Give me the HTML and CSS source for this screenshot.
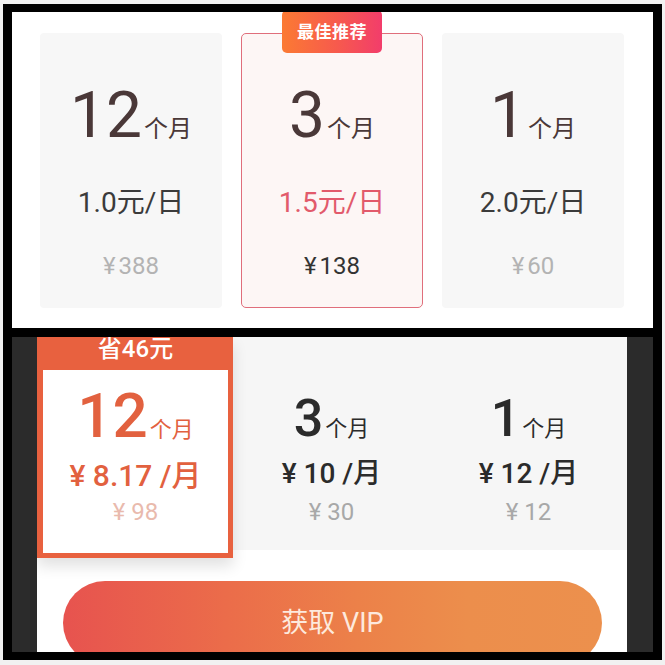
FILE: index.html
```html
<!DOCTYPE html>
<html lang="zh">
<head>
<meta charset="utf-8">
<link rel="stylesheet" href="styles.css">
</head>
<body>
<div class="frame">
  <section class="top-panel">
    <div class="plan">
      <div class="dur"><span class="num">12</span><span class="unit">个月</span></div>
      <div class="daily">1.0元/日</div>
      <div class="price"><span class="yen">¥</span>388</div>
    </div>
    <div class="plan plan-best">
      <div class="badge">最佳推荐</div>
      <div class="dur"><span class="num">3</span><span class="unit">个月</span></div>
      <div class="daily">1.5元/日</div>
      <div class="price"><span class="yen">¥</span>138</div>
    </div>
    <div class="plan">
      <div class="dur"><span class="num">1</span><span class="unit">个月</span></div>
      <div class="daily">2.0元/日</div>
      <div class="price"><span class="yen">¥</span>60</div>
    </div>
  </section>
  <section class="bottom-panel">
    <div class="options">
      <div class="opt opt-sel">
        <div class="save">省46元</div>
        <div class="opt-body">
          <div class="odur"><span class="onum">12</span><span class="ounit">个月</span></div>
          <div class="omonth">¥ 8.17 /月</div>
          <div class="oprice">¥ 98</div>
        </div>
      </div>
      <div class="opt">
        <div class="odur"><span class="onum">3</span><span class="ounit">个月</span></div>
        <div class="omonth">¥ 10 /月</div>
        <div class="oprice">¥ 30</div>
      </div>
      <div class="opt">
        <div class="odur"><span class="onum">1</span><span class="ounit">个月</span></div>
        <div class="omonth">¥ 12 /月</div>
        <div class="oprice">¥ 12</div>
      </div>
    </div>
    <div class="cta">获取 VIP</div>
  </section>
</div>
</body>
</html>
```

FILE: styles.css
```css
html, body {
  margin: 0;
  padding: 0;
  background: #f1f1f1;
  font-family: "Roboto", "Noto Sans CJK SC", sans-serif;
}

.frame {
  margin: 4px 0 0 3px;
  width: 659px;
  height: 656px;
  box-sizing: border-box;
  padding: 8px 9px 8px 9px;
  background: #000;
  display: flex;
  flex-direction: column;
  gap: 9px;
}

/* ---------- top panel ---------- */
.top-panel {
  height: 316px;
  flex: none;
  background: #fff;
  box-sizing: border-box;
  padding: 21px 0 0 28px;
  display: grid;
  grid-template-columns: 182px 182px 182px;
  column-gap: 19px;
  align-items: start;
  overflow: hidden;
}

.plan {
  position: relative;
  height: 275px;
  box-sizing: border-box;
  background: #f7f7f7;
  border-radius: 4px;
  padding-top: 51px;
  display: flex;
  flex-direction: column;
  align-items: center;
}

.plan-best {
  background: #fdf6f5;
  border: 1.5px solid #e06e7b;
  border-radius: 5px;
  padding-top: 49.5px;
}

.badge {
  position: absolute;
  top: -24px;
  left: 50%;
  transform: translateX(-50%);
  width: 100px;
  height: 43px;
  border-radius: 5px;
  background: linear-gradient(90deg, #fb7a33 0%, #f75a4d 55%, #f23d6b 100%);
  color: #fff;
  font-weight: 700;
  font-size: 17px;
  line-height: 43px;
  padding-top: 1px;
  box-sizing: border-box;
  text-align: center;
  letter-spacing: 0.5px;
}

.dur {
  height: 64px;
  line-height: 64px;
  color: #4a3838;
  white-space: nowrap;
}

.num {
  font-size: 64px;
  font-weight: 400;
}

.unit {
  font-size: 24px;
  margin-left: 2px;
}

.daily {
  margin-top: 35px;
  height: 40px;
  line-height: 40px;
  font-size: 28px;
  color: #3b3b3b;
}

.plan-best .daily {
  color: #e25a6b;
}

.price {
  margin-top: 28px;
  height: 30px;
  line-height: 30px;
  font-size: 24px;
  color: #b3b3b3;
}

.yen {
  margin-right: 3px;
}

.plan-best .price {
  color: #333;
}

/* ---------- bottom panel ---------- */
.bottom-panel {
  height: 315px;
  flex: none;
  background: #fff;
  border-left: 25px solid #2b2b2b;
  border-right: 26px solid #2b2b2b;
  overflow: hidden;
  display: flex;
  flex-direction: column;
}

.options {
  height: 213px;
  flex: none;
  background: #f6f6f6;
  display: grid;
  grid-template-columns: 196px 1fr 1fr;
  align-items: start;
}

.opt {
  display: flex;
  flex-direction: column;
  align-items: center;
  padding-top: 51px;
}

.opt-sel {
  position: relative;
  z-index: 1;
  height: 221px;
  box-sizing: border-box;
  padding: 0 5px 5px 6px;
  background: #e8613f;
  box-shadow: 0 8px 14px rgba(0, 0, 0, 0.12);
}

.save {
  height: 33px;
  line-height: 22px;
  padding-top: 1px;
  box-sizing: border-box;
  font-size: 24px;
  font-weight: 500;
  color: #fff;
  text-align: center;
}

.opt-body {
  flex: 1;
  align-self: stretch;
  background: #fff;
  display: flex;
  flex-direction: column;
  align-items: center;
  padding-top: 15px;
}

.odur {
  height: 62px;
  line-height: 62px;
  color: #2b2b2b;
  white-space: nowrap;
}

.onum {
  font-size: 52px;
  font-weight: 500;
}

.opt-sel .onum {
  font-size: 62px;
}

.ounit {
  font-size: 22px;
  margin-left: 2px;
}

.omonth {
  margin-top: 6px;
  height: 36px;
  line-height: 36px;
  font-size: 28px;
  font-weight: 500;
  color: #2b2b2b;
}

.oprice {
  margin-top: 5px;
  height: 30px;
  line-height: 30px;
  font-size: 24px;
  color: #a8a8a8;
}

.opt-sel .odur,
.opt-sel .omonth {
  color: #e2613f;
}

.opt-sel .omonth {
  margin-top: 11px;
  font-size: 30px;
}

.opt-sel .oprice {
  margin-top: 3px;
  color: #e9baad;
}

.cta {
  flex: none;
  margin: 31px 25px 0 26px;
  height: 84px;
  border-radius: 42px;
  background: linear-gradient(90deg, #e7534f 0%, #eb6c4a 30%, #ec8149 55%, #ec8e4c 75%, #ec904d 100%);
  color: #fde9dd;
  font-size: 27px;
  line-height: 84px;
  text-align: center;
}
```
